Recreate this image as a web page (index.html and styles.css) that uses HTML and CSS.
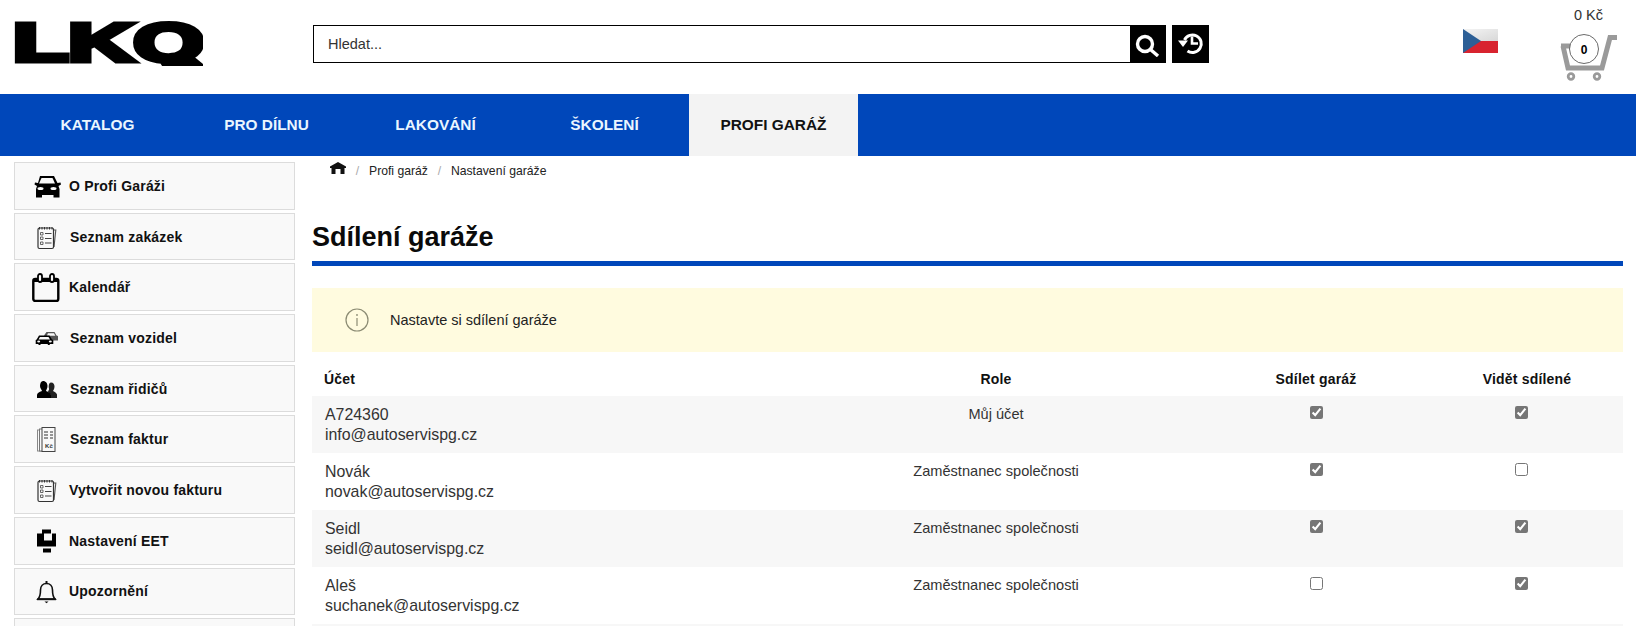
FILE: index.html
```html
<!DOCTYPE html>
<html lang="cs">
<head>
<meta charset="utf-8">
<title>Sdílení garáže</title>
<link rel="stylesheet" href="styles.css">
</head>
<body>
<div class="page">
  <header class="top">
    <svg class="logo" viewBox="0 -12 189 72" width="189" height="72" role="img" aria-label="LKQ">
      <defs><clipPath id="logo-clip"><rect x="-4" y="-12" width="197" height="60"/></clipPath></defs>
      <text class="logo-text" x="-1" y="42.500" textLength="191" lengthAdjust="spacingAndGlyphs" clip-path="url(#logo-clip)">LKQ</text>
      <polygon class="logo-tail" points="160,38 172,32 189,46 189,48 170,48"/>
    </svg>
    <form class="search">
      <input class="search-input" type="text" placeholder="Hledat...">
      <button class="search-btn" type="button" aria-label="Hledat">
        <svg viewBox="0 0 26 26" width="26" height="26"><circle cx="10" cy="13" r="7.500" fill="none" stroke="#fff" stroke-width="3.400"/><path d="M15.500 18.500 23 25" stroke="#fff" stroke-width="3.400"/></svg>
      </button>
      <button class="history-btn" type="button" aria-label="Historie">
        <svg viewBox="0 0 26 26" width="26" height="26"><path d="M6.500 9A8.800 8.800 0 1 1 9.500 20" fill="none" stroke="#fff" stroke-width="3"/><path d="M0 9.500h10l-5 6.500z" fill="#fff"/><path d="M14 5.500v7h6" fill="none" stroke="#fff" stroke-width="2.600"/></svg>
      </button>
    </form>
    <svg class="flag" viewBox="0 0 35 24" width="35" height="24" aria-label="Česko">
      <defs><linearGradient id="fw" x1="0" y1="0" x2="1" y2="1"><stop offset="0" stop-color="#f4f4f4"/><stop offset="1" stop-color="#d8d8d8"/></linearGradient></defs>
      <rect width="35" height="12" fill="url(#fw)"/>
      <rect y="12" width="35" height="12" fill="#d8232f"/>
      <polygon points="0,0 18,12 0,24" fill="#2d5f96"/>
    </svg>
    <div class="cart">
      <span class="cart-price">0 Kč</span>
      <svg class="cart-icon" viewBox="0 0 57 48" width="57" height="48">
        <path d="M1 12h9M3 12l5 22h34L50 3.500h7" fill="none" stroke="#9a9a9a" stroke-width="5"/>
        <circle cx="24" cy="15" r="14.500" fill="#fff" stroke="#444" stroke-width=".8"/>
        <text class="cart-count" x="24" y="19.500">0</text>
        <circle cx="11" cy="42.500" r="2.800" fill="#fff" stroke="#9a9a9a" stroke-width="2.800"/>
        <circle cx="37" cy="42.500" r="2.800" fill="#fff" stroke="#9a9a9a" stroke-width="2.800"/>
      </svg>
    </div>
  </header>

  <nav class="main-nav">
    <a class="nav-item">KATALOG</a>
    <a class="nav-item">PRO DÍLNU</a>
    <a class="nav-item">LAKOVÁNÍ</a>
    <a class="nav-item">ŠKOLENÍ</a>
    <a class="nav-item nav-active">PROFI GARÁŽ</a>
  </nav>

  <div class="content">
    <aside class="side">
      <a class="side-btn">
        <svg class="side-icon" viewBox="0 0 30 30"><path d="M8 5h14l3.500 7 3-.5.500 2-2.500 1.500 1 3v8.500h-6V24H10v2.500H4V18l1-3-2.500-1.500.5-2 3 .5z" fill="#000"/><path d="M9.500 7h11l2.500 5.500H7z" fill="#f9f9f9"/><ellipse cx="8.500" cy="17.500" rx="3" ry="1.500" fill="#f9f9f9"/><ellipse cx="21.500" cy="17.500" rx="3" ry="1.500" fill="#f9f9f9"/></svg>
        <span>O Profi Garáži</span>
      </a>
      <a class="side-btn side-wide">
        <svg class="side-icon" viewBox="0 0 30 30"><use href="#note"/></svg>
        <span>Seznam zakázek</span>
      </a>
      <a class="side-btn">
        <svg class="side-icon" viewBox="0 0 30 30"><rect x="1.300" y="7" width="25" height="22" rx="2" fill="none" stroke="#000" stroke-width="2.400"/><path d="M1 7h26v3H1z" fill="#000"/><rect x="6" y="2" width="4" height="8" rx="2" fill="#f9f9f9" stroke="#000" stroke-width="1.800"/><rect x="18" y="2" width="4" height="8" rx="2" fill="#f9f9f9" stroke="#000" stroke-width="1.800"/></svg>
        <span>Kalendář</span>
      </a>
      <a class="side-btn side-wide">
        <svg class="side-icon" viewBox="0 0 30 30"><path d="M12 12.500 14.500 9h8l2 3.500 1.500.5v4.500h-8z" fill="#555"/><path d="M16 10.300h6l1.300 2.400h-8.500z" fill="#f9f9f9"/><path d="M7 12.500h10.500l2.500 4 1.300.5v4h-3.500v1h-2v-1H8.500v1h-2v-1H3.700v-4l1-.5z" fill="#000"/><path d="M8 14h8.500l1.500 2.500H6.500z" fill="#f9f9f9"/><ellipse cx="6.700" cy="18.500" rx="1.500" ry=".9" fill="#f9f9f9"/><ellipse cx="18.300" cy="18.500" rx="1.500" ry=".9" fill="#f9f9f9"/></svg>
        <span>Seznam vozidel</span>
      </a>
      <a class="side-btn side-wide">
        <svg class="side-icon" viewBox="0 0 30 30"><path d="M19 8.500c2.500 0 3.500 2 3.500 4 0 2-1 3.500-1.500 4.500 2 1 3.500 2 4 3.500V24h-6v-3l-3-3c0-1.500 1.500-2 1-3.500-.500-1.500-.5-6 2-6z" fill="#222"/><path d="M11 7c3 0 4.500 2.500 4.500 5 0 2.500-1.500 4-1.500 5 2.500 1 5 2 5 4v3H5v-3c0-2 2-3 5-4 0-1-2-2.500-2-5s1-5 3-5z" fill="#000"/></svg>
        <span>Seznam řidičů</span>
      </a>
      <a class="side-btn side-wide">
        <svg class="side-icon" viewBox="0 0 30 30"><rect x="5.500" y="6" width="12" height="21" fill="none" stroke="#888"/><rect x="7.500" y="5" width="12" height="22" fill="#f9f9f9" stroke="#777"/><rect x="10" y="3.500" width="13" height="24" fill="#f9f9f9" stroke="#444"/><path d="M12 8h4M18 8h3M12 11h4M18 11h3M12 14h4M18 14h3" stroke="#333" stroke-width="1.200"/><text class="side-tiny" x="13" y="24">Kč</text></svg>
        <span>Seznam faktur</span>
      </a>
      <a class="side-btn">
        <svg class="side-icon" viewBox="0 0 30 30"><use href="#note"/></svg>
        <span>Vytvořit novou fakturu</span>
      </a>
      <a class="side-btn">
        <svg class="side-icon" viewBox="0 0 30 30"><path d="M10 3.500h9v4h-9zM5 7.500h7v13H5zM20 7.500h4v13H12v-6h8zM11 22.500h8v4h-8z" fill="#000"/></svg>
        <span>Nastavení EET</span>
      </a>
      <a class="side-btn">
        <svg class="side-icon" viewBox="0 0 30 30"><path d="M6 23c2-2 2.500-4 2.500-9 0-4 2.500-6.500 6-6.500s6 2.500 6 6.500c0 5 .5 7 2.500 9z" fill="none" stroke="#111" stroke-width="1.600"/><path d="M5 23.300h19" stroke="#111" stroke-width="1.800"/><path d="M14.500 5v2.500" stroke="#111" stroke-width="2"/><path d="M12.500 25.500h4l-2 1.800z" fill="#111"/></svg>
        <span>Upozornění</span>
      </a>
      <a class="side-btn"></a>
      <svg class="sprite" width="0" height="0">
        <defs>
          <g id="note">
            <path d="M21 8h2.800L22 25" fill="none" stroke="#555" stroke-width="1.100"/>
            <rect x="6" y="6" width="15.500" height="20.500" rx="1.500" fill="#f9f9f9" stroke="#333" stroke-width="1.200"/>
            <path d="M7.500 5v2.500M10 5v2.500M12.500 5v2.500M15 5v2.500M17.500 5v2.500M20 5v2.500" stroke="#333"/>
            <path d="M8.500 10.500h2.500v2.500H8.500zM8.500 15h2.500v2.500H8.500zM8.500 20h2.500v2.500H8.500z" fill="none" stroke="#444" stroke-width=".8"/>
            <path d="M13 11.500h6.500M13 16.500h6.500M13 21h6.500" stroke="#444" stroke-width="1.100"/>
          </g>
        </defs>
      </svg>
    </aside>

    <main class="main">
      <ol class="crumbs">
        <li class="crumb-home"><svg viewBox="0 0 16 12" width="16" height="12" aria-label="Domů"><path d="M8 0 16 4.500v1.500h-1.500v6h-4V7h-5v5h-4V6H0V4.500z" fill="#111"/></svg></li>
        <li class="crumb-sep">/</li>
        <li>Profi garáž</li>
        <li class="crumb-sep">/</li>
        <li>Nastavení garáže</li>
      </ol>
      <h1 class="title">Sdílení garáže</h1>
      <div class="notice">
        <svg class="notice-icon" viewBox="0 0 24 24" width="24" height="24"><circle cx="12" cy="12" r="11" fill="none" stroke="#8b8b73" stroke-width="1.200"/><path d="M12 10v8" stroke="#8b8b73" stroke-width="1.200"/><circle cx="12" cy="7" r=".9" fill="#8b8b73"/></svg>
        <span>Nastavte si sdílení garáže</span>
      </div>
      <table class="share">
        <colgroup>
          <col class="col-account"><col class="col-role"><col class="col-share"><col class="col-see">
        </colgroup>
        <thead>
          <tr>
            <th class="th-account">Účet</th>
            <th>Role</th>
            <th>Sdílet garáž</th>
            <th>Vidět sdílené</th>
          </tr>
        </thead>
        <tbody>
          <tr>
            <td class="account">A724360<br>info@autoservispg.cz</td>
            <td class="role">Můj účet</td>
            <td class="check"><input type="checkbox" checked></td>
            <td class="check check-see"><input type="checkbox" checked></td>
          </tr>
          <tr>
            <td class="account">Novák<br>novak@autoservispg.cz</td>
            <td class="role">Zaměstnanec společnosti</td>
            <td class="check"><input type="checkbox" checked></td>
            <td class="check check-see"><input type="checkbox"></td>
          </tr>
          <tr>
            <td class="account">Seidl<br>seidl@autoservispg.cz</td>
            <td class="role">Zaměstnanec společnosti</td>
            <td class="check"><input type="checkbox" checked></td>
            <td class="check check-see"><input type="checkbox" checked></td>
          </tr>
          <tr>
            <td class="account">Aleš<br>suchanek@autoservispg.cz</td>
            <td class="role">Zaměstnanec společnosti</td>
            <td class="check"><input type="checkbox"></td>
            <td class="check check-see"><input type="checkbox" checked></td>
          </tr>
          <tr class="row-next"><td></td><td></td><td></td><td></td></tr>
        </tbody>
      </table>
    </main>
  </div>
</div>
</body>
</html>
```

FILE: styles.css
```css
* { box-sizing: border-box; }
html, body { margin: 0; padding: 0; }
body { font-family: "Liberation Sans", Arial, sans-serif; color: #111; background: #fff; }
.page { width: 1636px; height: 626px; overflow: hidden; }

.top { display: flex; align-items: flex-start; height: 94px; padding-left: 14px; }
.logo { margin-top: 6px; margin-right: 110px; flex: none; }
.logo-text { font-family: "Liberation Sans", Arial, sans-serif; font-weight: 700; font-size: 54px; fill: #000; stroke: #000; stroke-width: 5px; }
.logo-tail { fill: #000; }

.search { display: flex; margin-top: 25px; }
.search-input { width: 817px; height: 38px; border: 1px solid #000; border-right: 0; padding: 0 14px; font: 14.500px "Liberation Sans", Arial, sans-serif; outline: 0; }
.search-input::placeholder { color: #333; opacity: 1; }
.search-btn, .history-btn { display: flex; align-items: center; justify-content: center; height: 38px; border: 0; padding: 0; background: #000; }
.search-btn { width: 36px; }
.history-btn { width: 37px; margin-left: 6px; }

.flag { margin-top: 29px; margin-left: 254px; flex: none; }
.cart { display: flex; flex-direction: column; align-items: center; width: 57px; margin-left: 62px; padding-top: 7px; }
.cart-price { font-size: 14.500px; line-height: 16px; color: #333; }
.cart-icon { margin-top: 11px; flex: none; }
.cart-count { font-size: 12px; font-weight: 700; text-anchor: middle; fill: #000; }

.main-nav { display: flex; height: 62px; padding-left: 13px; background: #0047ba; }
.nav-item { display: flex; align-items: center; justify-content: center; width: 169px; font-size: 15.400px; font-weight: 700; color: #eaf6ff; }
.nav-active { background: #f3f3f3; color: #111; }

.content { display: flex; gap: 17px; padding-left: 14px; }
.side { display: flex; flex-direction: column; gap: 3px; width: 281px; padding-top: 6px; flex: none; }
.side-btn { display: flex; align-items: center; height: 47.700px; flex: none; padding-left: 17px; background: #f9f9f9; border: 1px solid #dcdcdc; font-size: 14px; font-weight: 700; letter-spacing: .2px; color: #111; }
.side-icon { width: 30px; height: 30px; margin-right: 7px; flex: none; }
.side-wide .side-icon { margin-right: 8px; }
.side-tiny { font-size: 6px; fill: #333; }
.sprite { position: absolute; }

.main { width: 1311px; }
.crumbs { display: flex; align-items: center; height: 18px; margin: 6px 0 0; padding: 0 0 0 18px; list-style: none; font-size: 12.200px; color: #222; }
.crumb-home { display: flex; margin-top: -6px; }
.crumb-sep { width: 23px; text-align: center; color: #aaa; }
.title { margin: 38px 0 0; height: 48px; border-bottom: 5px solid #0047ba; font-size: 27px; line-height: 38px; font-weight: 700; color: #0a0a0a; }
.notice { display: flex; align-items: center; height: 64px; margin-top: 22px; padding-left: 33px; background: #fffbdf; font-size: 14.500px; color: #222; }
.notice-icon { margin-right: 21px; flex: none; }

.share { width: 100%; table-layout: fixed; border-collapse: collapse; }
.col-account { width: 479px; }
.col-role { width: 410px; }
.col-share { width: 230px; }
.col-see { width: 192px; }
.share th { height: 44px; padding: 10px 0 0; font-size: 14px; font-weight: 700; letter-spacing: .2px; text-align: center; color: #111; vertical-align: middle; }
.share .th-account { padding-left: 12px; text-align: left; }
.share td { height: 57px; padding: 0; vertical-align: top; }
.share tbody tr:nth-child(odd) { background: #f7f7f7; }
.account { padding: 9px 0 0 13px !important; font-size: 15.900px; line-height: 19.500px; color: #333; }
.role { padding-top: 10px !important; font-size: 14.600px; line-height: 16px; text-align: center; color: #333; }
.check { padding-top: 9px !important; text-align: center; }
.check-see { padding-right: 12px !important; }
.check input { width: 13px; height: 13px; margin: 0; accent-color: #767676; }
```
